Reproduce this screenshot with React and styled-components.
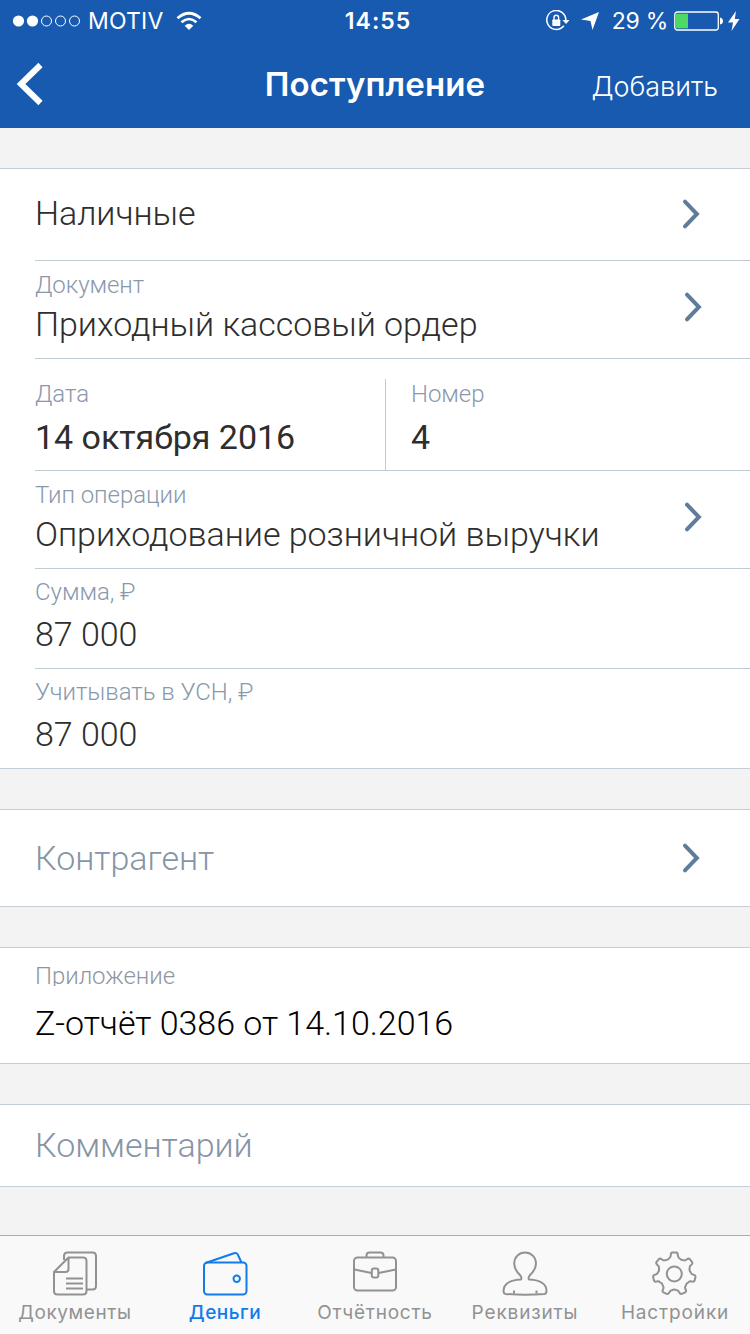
import React from 'react'
import styled, { createGlobalStyle } from 'styled-components'

const GlobalStyle = createGlobalStyle`
    *{
        box-sizing: border-box;
    }
    body{
        margin: 0;
        background: #f3f3f3;
        font-family: Roboto, "Liberation Sans", sans-serif;
        font-weight: 300;
    }
`;

const tabs = [
    { id: 'docs', title: 'Документы', spacing: 0.6, icon: <DocsIcon /> },
    { id: 'money', title: 'Деньги', spacing: 0.5, icon: <WalletIcon /> },
    { id: 'reports', title: 'Отчётность', spacing: 0.75, icon: <CaseIcon /> },
    { id: 'details', title: 'Реквизиты', spacing: 0.85, icon: <PersonIcon /> },
    { id: 'settings', title: 'Настройки', spacing: 0.85, icon: <GearIcon /> },
]

function DocsIcon() {
    return (
        <svg width="46" height="46" viewBox="-1 0 46 46">
            <path d="M11 9V5q0-3.500 3.500-3.500H39.500q3.500 0 3.500 3.500V35q0 3.500-3.500 3.500H33.500" />
            <path d="M15.500 6.500H30q3.500 0 3.500 3.500V40q0 3.500-3.500 3.500H4.500Q1 43.500 1 40V21L15.500 6.500V18q0 3-3 3H1" />
            <path d="M13 27.500h17M13 32.500h17M13 37.500h17" />
        </svg>
    )
}

function WalletIcon() {
    return (
        <svg width="46" height="46" viewBox="-1 0 46 46">
            <rect x="1" y="11.500" width="42.500" height="32" rx="3.500" />
            <path d="M2.500 12L31 2.200q3-1 4 1.800l3.500 7.500" />
            <circle cx="33.700" cy="27.700" r="3.200" />
        </svg>
    )
}

function CaseIcon() {
    return (
        <svg width="46" height="46" viewBox="-.5 0 46 46">
            <rect x="1.500" y="6.500" width="42" height="33" rx="3.500" />
            <path d="M14 6V4.500q0-3 3-3H28q3 0 3 3V6" />
            <path d="M2 18.500L19 22M26 22L43.500 18.500" />
            <rect x="19.300" y="17.500" width="6.500" height="9" rx="2" />
        </svg>
    )
}

function PersonIcon() {
    return (
        <svg width="46" height="46" viewBox="-.5 0 46 46">
            <path d="M18.500 28.500c1.200-1.800.2-3.200-1.500-5C14 20.500 11.700 17 11.700 12.800 11.700 6 16.500 1.500 22.500 1.500S33.500 6 33.500 12.800c0 4.200-2.500 7.700-5.500 10.700-1.700 1.800-2.700 3.200-1.500 5 9 .3 17.500 3.500 17.500 11.500 0 1.500-.5 2.700-2 2.900-13 1.100-26 1.100-39 0-1.500-.2-2-1.400-2-2.900 0-8 8.500-11.200 17.500-11.500z" />
            <path d="M11.500 39.500v3M34 39.500v3" />
        </svg>
    )
}

// seven teeth around the hub
function GearIcon() {
    const point = (deg, r) => {
        const a = (deg - 90) * Math.PI / 180
        return `${(22.3 + r * Math.cos(a)).toFixed(2)} ${(22.9 + r * Math.sin(a)).toFixed(2)}`
    }
    const step = 360 / 7
    let d = `M${point(-10.5, 19.3)}`
    for (let i = 0; i < 7; i++) {
        const c = i * step
        d += `Q${point(c - 9.5, 21.4)} ${point(c - 5, 21.4)}`
        d += `L${point(c + 5, 21.4)}Q${point(c + 9.5, 21.4)} ${point(c + 10.5, 19.3)}`
        d += `Q${point(c + 11.5, 16.9)} ${point(c + 17, 16.6)}`
        d += `Q${point(c + step / 2, 15)} ${point(c + step - 17, 16.6)}`
        d += `Q${point(c + step - 11.5, 16.9)} ${point(c + step - 10.5, 19.3)}`
    }
    return (
        <svg width="46" height="46" viewBox="0 0 46 46">
            <path d={d + 'Z'} />
            <circle cx="22.300" cy="22.900" r="7.500" />
        </svg>
    )
}

function Chevron() {
    return (
        <svg width="20" height="32" viewBox="0 0 20 32">
            <path d="M3 3.700L14.900 16L3 28.300" fill="none" stroke="#5f7c9b" strokeWidth="4" strokeLinecap="round" />
        </svg>
    )
}

function StatusBar() {
    return (
        <StatusStyled>
            <div className='side'>
                <svg width="70" height="14" viewBox="0 0 70 14">
                    <circle cx="6.500" cy="7" r="5.600" fill="#fff" />
                    <circle cx="20.500" cy="7" r="5.600" fill="#fff" />
                    <circle cx="34.500" cy="7" r="5" fill="none" stroke="#fff" />
                    <circle cx="48.500" cy="7" r="5" fill="none" stroke="#fff" />
                    <circle cx="62.500" cy="7" r="5" fill="none" stroke="#fff" />
                </svg>
                <Carrier>MOTIV</Carrier>
                <svg width="26" height="20" viewBox="0 0 26 20" fill="none" stroke="#fff">
                    <path d="M1.500 7.200Q13-2.800 24.500 7.200" strokeWidth="2.800" />
                    <path d="M5.500 11.200Q13 4.800 20.500 11.200" strokeWidth="2.600" />
                    <path d="M8.700 14.700Q13 11 17.300 14.700L13 19z" fill="#fff" stroke="none" />
                </svg>
            </div>
            <Clock>14:55</Clock>
            <div className='side right'>
                <svg width="24" height="22" viewBox="0 0 24 22">
                    <path d="M17.800 15.800A9.500 9.500 0 1 1 19.800 10" fill="none" stroke="#fff" strokeWidth="1.500" />
                    <path d="M16.500 10h7l-3.500 4z" fill="#fff" />
                    <rect x="6.300" y="9.500" width="8" height="6.500" rx=".8" fill="#fff" />
                    <path d="M8 10V7.500a2.300 2.300 0 0 1 4.600 0V10" fill="none" stroke="#fff" strokeWidth="1.400" />
                </svg>
                <svg className='arrow' width="18" height="18" viewBox="0 0 18 18">
                    <path d="M18 0L11.500 18L9.500 9L0 7.500z" fill="#fff" />
                </svg>
                <Percent>29 %</Percent>
                <svg width="49" height="20" viewBox="0 0 49 20">
                    <rect x=".8" y="1" width="43.500" height="18" rx="2.500" fill="none" stroke="#fff" strokeWidth="1.300" />
                    <rect x="2" y="2.700" width="12" height="14.600" fill="#4cd964" />
                    <path d="M46 6.500q3 .5 3 3.500t-3 3.500z" fill="#fff" />
                </svg>
                <svg className='bolt' width="12" height="20" viewBox="0 0 12 20">
                    <path d="M8 0L0 11.500h5L3.500 20L11.500 8H6.800z" fill="#fff" />
                </svg>
            </div>
        </StatusStyled>
    )
}

function Field({ label, value, chevron, ...layout }) {
    return (
        <Row {...layout}>
            <div className='text'>
                {label}
                {value}
            </div>
            {chevron && <Chevron />}
        </Row>
    )
}

function App() {
    return (
        <Screen>
            <GlobalStyle />
            <Header>
                <StatusBar />
                <NavBar>
                    <svg width="30" height="44" viewBox="0 0 30 44">
                        <path d="M25.500 3L6 22L25.500 41" fill="none" stroke="#fff" strokeWidth="6" />
                    </svg>
                    <Title>Поступление</Title>
                    <AddButton>Добавить</AddButton>
                </NavBar>
            </Header>
            <Content>
                <Section>
                    <Field $height={92} $top={24} $chevronTop={29} $right={48} chevron value={<Value>Наличные</Value>} />
                    <Field $height={98} $top={10} $gap={5} $chevronTop={30} chevron
                        label={<Label>Документ</Label>} value={<Value>Приходный кассовый ордер</Value>} />
                    <SplitRow>
                        <div className='date'>
                            <Label>Дата</Label>
                            <Value $strong>14 октября 2016</Value>
                        </div>
                        <div className='number'>
                            <Label>Номер</Label>
                            <Value $strong>4</Value>
                        </div>
                    </SplitRow>
                    <Field $height={98} $top={10} $gap={5} $chevronTop={30} chevron
                        label={<Label>Тип операции</Label>} value={<Value>Оприходование розничной выручки</Value>} />
                    <Field $height={100} $top={9} $gap={8}
                        label={<Label>Сумма, ₽</Label>} value={<Value>87 000</Value>} />
                    <Field $height={99} $top={9} $gap={8} $last
                        label={<Label>Учитывать в УСН, ₽</Label>} value={<Value>87 000</Value>} />
                </Section>
                <Section>
                    <Field $height={96} $top={28} $chevronTop={32} $right={48} $last chevron
                        value={<Value $muted>Контрагент</Value>} />
                </Section>
                <Section>
                    <Field $height={115} $top={14} $gap={17} $last
                        label={<Label $clipped>Приложение</Label>}
                        value={<Value $dark>Z-отчёт 0386 от 14.10.2016</Value>} />
                </Section>
                <Section>
                    <Field $height={81} $top={20} $last value={<Value $muted>Комментарий</Value>} />
                </Section>
            </Content>
            <TabBar>
                {tabs.map((tab) => {
                    return <Tab key={tab.id} $active={tab.id === 'money'} $spacing={tab.spacing}>
                        {tab.icon}
                        <span>{tab.title}</span>
                    </Tab>
                })}
            </TabBar>
        </Screen>
    )
}

const Screen = styled.div`
    width: 750px;
    height: 1334px;
    display: flex;
    flex-direction: column;
    overflow: hidden;
    background: #f3f3f3;
`;

const Header = styled.header`
    height: 128px;
    background: #175ab0;
    color: #fff;
`;

const StatusStyled = styled.div`
    height: 41px;
    padding: 0 10px 0 12px;
    display: grid;
    grid-template-columns: 1fr auto 1fr;
    align-items: center;
    font-family: Inter, Roboto, sans-serif;
    font-size: 23px;
    line-height: 41px;

    svg{
        flex: none;
    }
    .side{
        display: flex;
        align-items: center;
    }
    .right{
        justify-content: flex-end;
    }
    .arrow{
        margin: 0 13px 0 11px;
    }
    .bolt{
        margin-left: 5px;
    }
`;

const Carrier = styled.span`
    margin: 1px 12px 0 6px;
    font-weight: 400;
    letter-spacing: 0.2px;
`;

const Clock = styled.span`
    margin: 1px 0 0 4px;
    font-weight: 600;
    letter-spacing: 1px;
`;

const Percent = styled.span`
    margin: 1px 6px 0 0;
    font-weight: 400;
    letter-spacing: -0.3px;
    white-space: nowrap;
`;

const NavBar = styled.nav`
    height: 87px;
    padding: 0 15px;
    display: grid;
    grid-template-columns: 1fr auto 1fr;
    align-items: center;

    svg{
        margin-top: -1px;
    }
`;

const Title = styled.h1`
    margin: -2px 0 0;
    font-family: Inter, Roboto, sans-serif;
    font-size: 33px;
    font-weight: 600;
    line-height: 40px;
    letter-spacing: 0.1px;
`;

const AddButton = styled.button`
    justify-self: end;
    margin: 4px 17px 0 0;
    padding: 0;
    border: none;
    background: none;
    color: #fff;
    font-family: Inter, Roboto, sans-serif;
    font-size: 27px;
    font-weight: 300;
    line-height: 40px;
`;

const Content = styled.main`
    flex: 1;
    padding-top: 40px;
    display: flex;
    flex-direction: column;
    gap: 40px;
`;

const Section = styled.section`
    padding-left: 35px;
    background: #fff;
    border-top: 1px solid #c5ced4;
    border-bottom: 1px solid #c5ced4;
`;

const Row = styled.div`
    height: ${(props) => props.$height}px;
    padding-right: ${(props) => props.$right || 46}px;
    display: flex;
    justify-content: space-between;
    align-items: flex-start;
    border-bottom: ${(props) => props.$last ? 'none' : '1px solid #c1ccd2'};

    .text{
        padding-top: ${(props) => props.$top}px;
        display: flex;
        flex-direction: column;
        gap: ${(props) => props.$gap || 0}px;
    }
    svg{
        margin-top: ${(props) => props.$chevronTop}px;
    }
`;

const SplitRow = styled.div`
    height: 112px;
    padding-top: 20px;
    display: grid;
    grid-template-columns: 350px 1fr;
    border-bottom: 1px solid #c1ccd2;

    .date, .number{
        padding-top: 1px;
        display: flex;
        flex-direction: column;
        gap: 9px;
    }
    .number{
        padding-left: 25px;
        border-left: 1px solid #c1ccd2;
    }
`;

const Label = styled.span`
    height: ${(props) => props.$clipped ? 24 : 28}px;
    overflow: ${(props) => props.$clipped ? 'hidden' : 'visible'};
    color: ${(props) => props.$clipped ? '#8f96a1' : '#8a98ac'};
    font-size: 24px;
    line-height: 28px;
    letter-spacing: -0.05px;
    white-space: nowrap;
`;

const Value = styled.span`
    color: ${(props) => props.$muted ? '#8695a6' : props.$dark ? '#000' : '#2e2e2e'};
    font-size: 34px;
    font-weight: ${(props) => props.$strong ? 400 : 300};
    line-height: 40px;
    letter-spacing: -0.03px;
    white-space: nowrap;
`;

const TabBar = styled.footer`
    height: 99px;
    display: grid;
    grid-template-columns: repeat(5, 150px);
    background: #f9f9f9;
    border-top: 1px solid #acacac;
`;

const Tab = styled.div`
    padding-top: 15px;
    display: flex;
    flex-direction: column;
    align-items: center;
    color: ${(props) => props.$active ? '#127bea' : '#929292'};
    font-family: Inter, Roboto, sans-serif;
    font-size: 19px;
    font-weight: ${(props) => props.$active ? 500 : 400};

    svg{
        fill: none;
        stroke: currentColor;
        stroke-width: 2;
        stroke-linejoin: round;
    }
    span{
        line-height: 24px;
        letter-spacing: ${(props) => props.$spacing}px;
        margin-top: 4px;
    }
`;

export default App
